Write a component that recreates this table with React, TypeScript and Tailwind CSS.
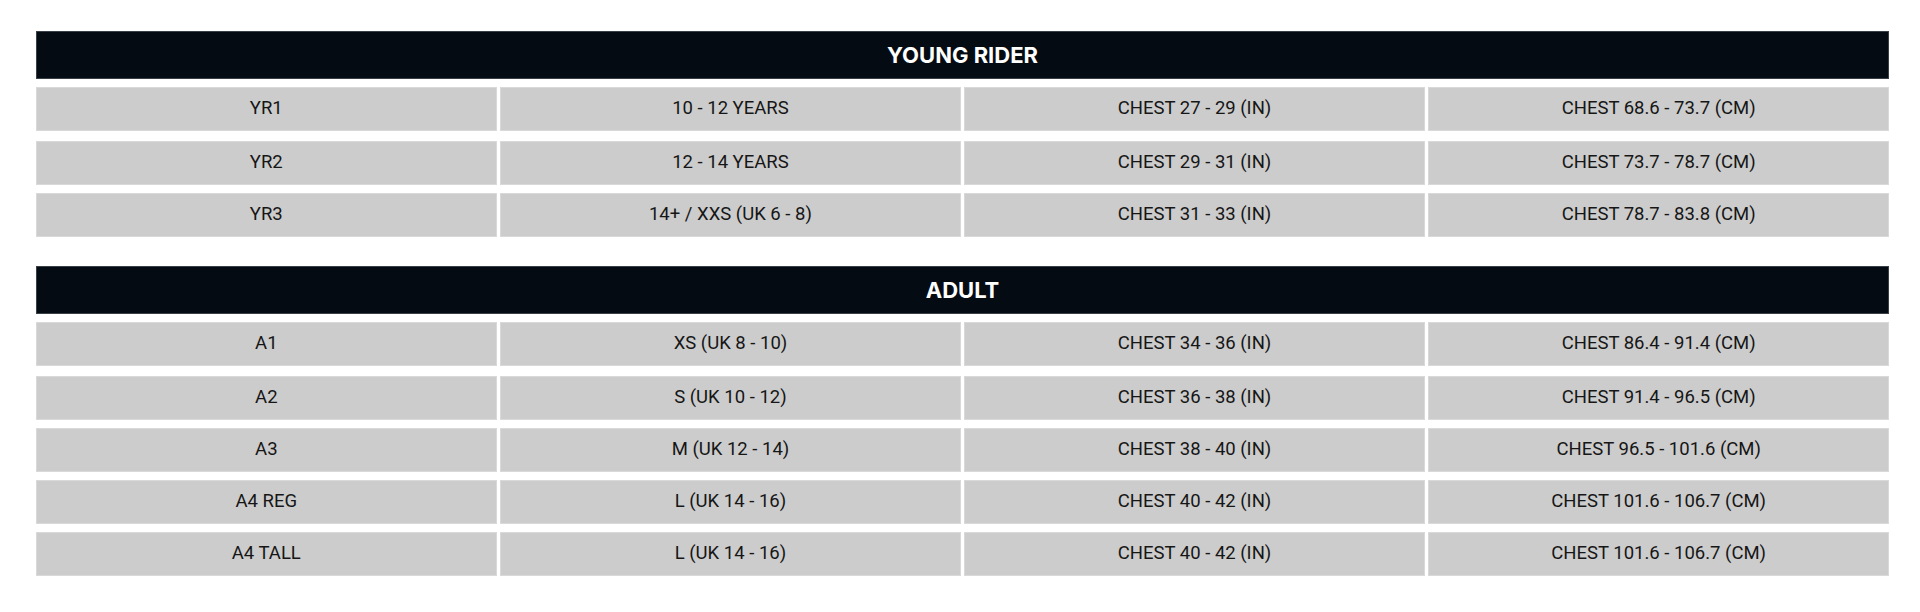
import React from "react";

type Row = [string, string, string, string];

const young: Row[] = [
  ["YR1", "10 - 12 YEARS", "CHEST 27 - 29 (IN)", "CHEST 68.6 - 73.7 (CM)"],
  ["YR2", "12 - 14 YEARS", "CHEST 29 - 31 (IN)", "CHEST 73.7 - 78.7 (CM)"],
  ["YR3", "14+ / XXS (UK 6 - 8)", "CHEST 31 - 33 (IN)", "CHEST 78.7 - 83.8 (CM)"],
];

const adult: Row[] = [
  ["A1", "XS (UK 8 - 10)", "CHEST 34 - 36 (IN)", "CHEST 86.4 - 91.4 (CM)"],
  ["A2", "S (UK 10 - 12)", "CHEST 36 - 38 (IN)", "CHEST 91.4 - 96.5 (CM)"],
  ["A3", "M (UK 12 - 14)", "CHEST 38 - 40 (IN)", "CHEST 96.5 - 101.6 (CM)"],
  ["A4 REG", "L (UK 14 - 16)", "CHEST 40 - 42 (IN)", "CHEST 101.6 - 106.7 (CM)"],
  ["A4 TALL", "L (UK 14 - 16)", "CHEST 40 - 42 (IN)", "CHEST 101.6 - 106.7 (CM)"],
];

const rowMargins = ["mt-[8px]", "mt-[10px]", "mt-[8px]", "mt-[8px]", "mt-[8px]"];

function Section({ title, rows, className }: { title: string; rows: Row[]; className: string }) {
  return (
    <div className={className}>
      <div className="h-[48px] bg-[#040b13] border border-[#3a4048] flex items-center justify-center text-white font-bold text-[22px] font-['Inter',sans-serif]">
        {title}
      </div>
      {rows.map((r, i) => (
        <div key={i} className={`grid grid-cols-4 gap-x-[3.5px] ${rowMargins[i]}`}>
          {r.map((c, j) => (
            <div
              key={j}
              className="h-[44px] bg-[#cccccc] border border-[#d9d9d9] flex items-center justify-center text-[#161616] text-[18.5px] font-['Roboto',sans-serif]"
            >
              {c}
            </div>
          ))}
        </div>
      ))}
    </div>
  );
}

export default function App() {
  return (
    <div className="w-[1920px] h-[612px] bg-white pl-[36px] pt-[31px]">
      <div className="w-[1853px]">
        <Section title="YOUNG RIDER" rows={young} className="" />
        <Section title="ADULT" rows={adult} className="mt-[29px]" />
      </div>
    </div>
  );
}
